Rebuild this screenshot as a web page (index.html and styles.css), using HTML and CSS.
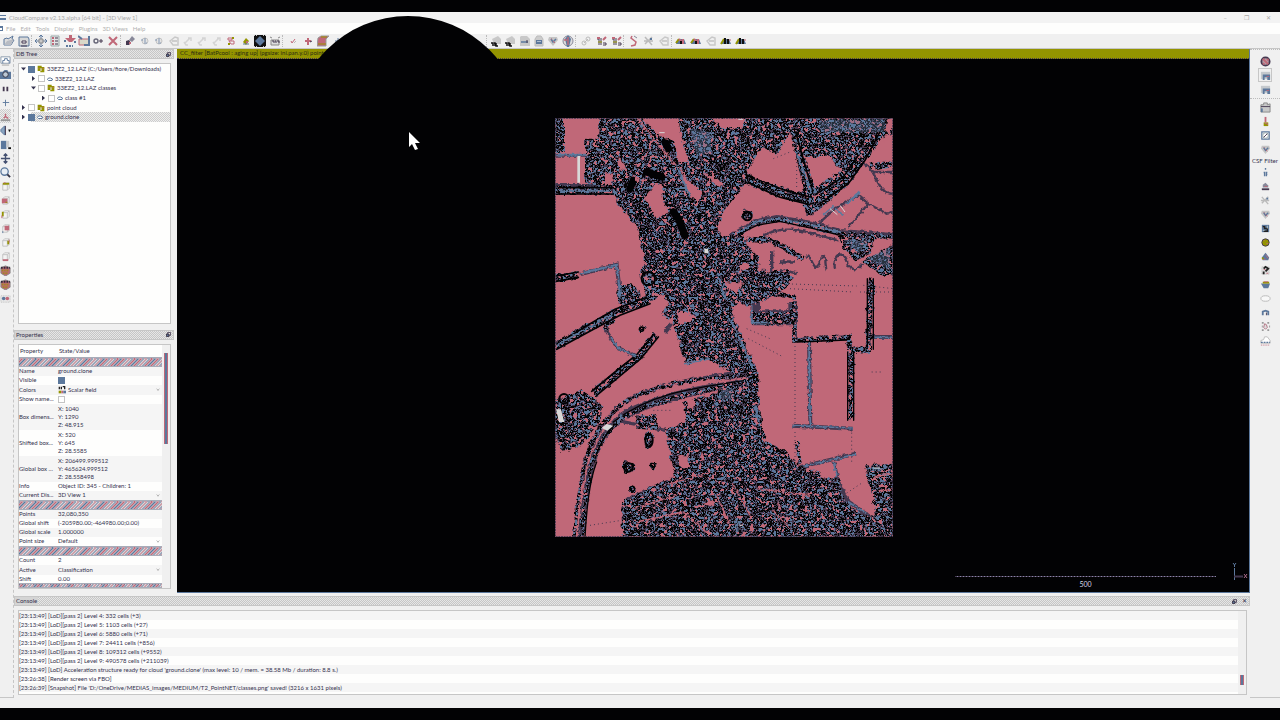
FILE: index.html
```html
<!DOCTYPE html>
<html lang="en">
<head>
<meta charset="utf-8">
<title>CloudCompare</title>
<link rel="stylesheet" href="styles.css">
</head>
<body>
<svg class="defs" aria-hidden="true">
<defs>
<symbol id="open" viewBox="0 0 12 12"><path d="M1 10V4l3-1 1 1 5-3-1 3 2 1-3 5z" fill="#ddd" stroke="#5c789c"/><path d="M1 10l3-4 7-2-3 6z" fill="#b8bcc4"/></symbol>
<symbol id="save" viewBox="0 0 12 12"><path d="M1 2h9l1 2v7H1z" fill="#d8d8d8" stroke="#5c789c"/><path d="M4 6h4v2H4zM3 11h6" fill="#fff" stroke="#443850"/></symbol>
<symbol id="move" viewBox="0 0 12 12"><path d="M6 0v12M0 6h12M4 2l2-2 2 2M4 10l2 2 2-2M2 4L0 6l2 2M10 4l2 2-2 2" fill="none" stroke="#5c789c"/><path d="M4 4h4v4H4z" fill="#c8c8c8" stroke="#888"/></symbol>
<symbol id="list" viewBox="0 0 12 12"><path d="M2 1h8v10H2z" fill="#e4e4e4" stroke="#9aa"/><path d="M3 3h2M3 6h2M3 9h2" stroke="#c06878" stroke-width="2"/><path d="M6 3h3M6 6h3M6 9h3" stroke="#443850"/></symbol>
<symbol id="drop" viewBox="0 0 12 12"><path d="M5 0h3v3h4L8 7H5L1 3h4z" fill="#c06878"/><path d="M1 5v2M11 6v2M2 11h7" stroke="#5c789c" stroke-width="2" stroke-dasharray="2 1"/></symbol>
<symbol id="merge" viewBox="0 0 12 12"><path d="M1 4h10v6H1z" fill="#d8d8c8" stroke="#c06878"/><path d="M0 1l4 3M11 1v9H6" fill="none" stroke="#5c789c" stroke-width="2"/></symbol>
<symbol id="plus" viewBox="0 0 12 12"><circle cx="4" cy="6" r="2" fill="none" stroke="#667" stroke-width="1.4"/><path d="M7 6h4M9 4v4" stroke="#443850"/></symbol>
<symbol id="cross" viewBox="0 0 12 12"><path d="M2 2l8 8M10 2L2 10" stroke="#c06878" stroke-width="2"/></symbol>
<symbol id="tool" viewBox="0 0 12 12"><path d="M8 1l3 3-3 3-3-2z" fill="#889"/><path d="M2 6l3-1 2 3-2 2H2z" fill="#443850"/><path d="M5 7h2v2H5z" fill="#c06878"/></symbol>
<symbol id="dim" viewBox="0 0 12 12"><circle cx="6" cy="6" r="3" fill="#e4e4e4" stroke="#c4c4c4"/><path d="M2 5h2M5 4h2M5 6h2M5 8h3" stroke="#8498b4"/></symbol>
<symbol id="pale" viewBox="0 0 12 12"><path d="M3 8l5-5M6 3h3v3M2 7l2 3h2" fill="none" stroke="#d4d4d4" stroke-width="1.5"/></symbol>
<symbol id="seg" viewBox="0 0 12 12"><path d="M3 3h4v2H3zM4 6h5v3H6z" fill="none" stroke="#c06878"/><path d="M8 2v2M4 8v2" stroke="#949400" stroke-width="2"/></symbol>
<symbol id="lamp" viewBox="0 0 12 12"><path d="M6 3l3 3-3 4-3-3z" fill="#949400"/><path d="M6 6h2v2H6z" fill="#c06878"/><path d="M3 9h6" stroke="#5c789c"/></symbol>
<symbol id="grid" viewBox="0 0 12 12"><path d="M0 0h12v12H0z" fill="#111"/><path d="M6 1l5 5-5 5-5-5z" fill="#5c789c"/><path d="M0 0h3M9 0h3M0 12h3M9 12h3" stroke="#c8c8c8" stroke-width="2" stroke-dasharray="1 1"/></symbol>
<symbol id="sor" viewBox="0 0 12 12"><path d="M1 2l2 1M11 2L9 3M2 10h8V5H2z" fill="#ddd" stroke="#888"/><path d="M3 6h2v2M6 6h1v2M8 6h2v2" fill="none" stroke="#443850"/></symbol>
<symbol id="tick" viewBox="0 0 12 12"><path d="M4 6l1 2 3-4" fill="none" stroke="#c06878"/><path d="M7 8l2-2" stroke="#bbb"/></symbol>
<symbol id="redplus" viewBox="0 0 12 12"><path d="M6 3v7M3 6h6" stroke="#c06878" stroke-width="2"/><path d="M8 7l2-1" stroke="#443850"/></symbol>
<symbol id="redbox" viewBox="0 0 12 12"><path d="M1 3l3-2h8l-3 3v7H0z" fill="#c06878" stroke="#999"/><path d="M4 2h6M1 9h8" stroke="#949400"/></symbol>
<symbol id="cam" viewBox="0 0 12 12"><path d="M2 4l6-3 3 3v5H4z" fill="#c8c8c8"/><path d="M1 8h2v3M4 8h1v3M6 8v3h2" fill="none" stroke="#111" stroke-width="1.5"/></symbol>
<symbol id="doc" viewBox="0 0 12 12"><path d="M2 1h6l3 3v7H1V2z" fill="#c8c8c8"/><path d="M2 7h7" stroke="#5c789c" stroke-width="1.5"/><path d="M8 5v3" stroke="#443850"/></symbol>
<symbol id="lock" viewBox="0 0 12 12"><path d="M2 4l2-3h4l2 3v7H2z" fill="#ccc" stroke="#bbb"/><path d="M3 5h6v4H3z" fill="#5c789c"/><path d="M5 6v1M7 6v1" stroke="#fff"/></symbol>
<symbol id="shield" viewBox="0 0 12 12"><path d="M2 2h8l1 3-5 6-5-6z" fill="#c4c4c4"/><path d="M4 4l2 3 3-3" fill="none" stroke="#5c789c" stroke-width="1.5"/><path d="M6 6l2 2M4 4h1" stroke="#c06878"/></symbol>
<symbol id="globe" viewBox="0 0 12 12"><circle cx="6" cy="6" r="5" fill="#ddd" stroke="#889"/><path d="M6 0l3 4-2 8H5L3 4z" fill="#5c789c"/><path d="M6 2v8M2 5h3" stroke="#c06878" stroke-width="1.4"/></symbol>
<symbol id="links" viewBox="0 0 12 12"><circle cx="4" cy="8" r="2" fill="none" stroke="#bbb"/><circle cx="8" cy="4" r="2" fill="none" stroke="#bbb"/><path d="M4 8l4-4" stroke="#bbb"/></symbol>
<symbol id="sf" viewBox="0 0 12 12"><path d="M2 4h2v6M6 3v7M8 8h3v2H8" fill="none" stroke="#443850"/><path d="M2 3h3M8 5l3-3" stroke="#c06878" stroke-width="2"/><path d="M3 7h4" stroke="#949400"/></symbol>
<symbol id="ramp" viewBox="0 0 12 12"><path d="M2 1v4M5 1v4M7 1h3v4" fill="none" stroke="#222" stroke-width="2"/><path d="M1 9h4" stroke="#949400" stroke-width="4"/><path d="M5 9h3" stroke="#c06878" stroke-width="4"/><path d="M8 9h4" stroke="#5c789c" stroke-width="4"/></symbol>
<symbol id="curve" viewBox="0 0 12 12"><path d="M4 1l-1 2 5 4-1 3-4 1" fill="none" stroke="#c06878" stroke-width="1.5"/><path d="M6 1l3 2" stroke="#889"/></symbol>
<symbol id="scis" viewBox="0 0 12 12"><path d="M2 2l7 8M9 2L2 9M1 6h9" stroke="#bbb" stroke-width="1.5"/><path d="M7 4h2" stroke="#5c789c" stroke-width="2"/></symbol>
<symbol id="gray" viewBox="0 0 12 12"><path d="M2 6l5-4 3 1v7H5z" fill="none" stroke="#c8c8c8" stroke-width="1.5"/><path d="M4 6h5" stroke="#aaa"/></symbol>
<symbol id="arc" viewBox="0 0 12 12"><path d="M1 9l2-5h6l2 5z" fill="#5c789c"/><path d="M1 8l3-4" stroke="#949400" stroke-width="2"/><path d="M4 4l4 4M8 4v5" stroke="#c06878" stroke-width="2"/><path d="M5 6h2v3H5z" fill="#111"/></symbol>
<symbol id="arcdark" viewBox="0 0 12 12"><path d="M1 9l3-5h5l2 5z" fill="#5c789c"/><path d="M1 9l3-5" stroke="#949400" stroke-width="2"/><path d="M5 3v6M8 4v5" stroke="#111" stroke-width="2"/><path d="M9 5h2" stroke="#c06878"/></symbol>
<symbol id="screen" viewBox="0 0 12 12"><path d="M1 2h10v7H1z" fill="#fff" stroke="#8898aa"/><path d="M3 9V6h2V4h3v2h2v3" fill="none" stroke="#5c789c"/><path d="M2 11h8" stroke="#c8c8c8" stroke-width="2"/></symbol>
<symbol id="camera" viewBox="0 0 12 12"><path d="M0 3h3l2-2h3l1 2h3v8H0z" fill="#5c789c"/><circle cx="6" cy="6" r="3" fill="#bcc8d4" stroke="#334"/></symbol>
<symbol id="pause" viewBox="0 0 12 12"><path d="M4 4v5M8 4v5" stroke="#443850" stroke-width="2"/></symbol>
<symbol id="thin" viewBox="0 0 12 12"><path d="M6 3v7M3 6h7" stroke="#5c789c"/></symbol>
<symbol id="axis" viewBox="0 0 12 12"><path d="M1 10h10" stroke="#999" stroke-width="2"/><path d="M6 3v4M4 8l2-2 3 2" fill="none" stroke="#c06878" stroke-width="1.5"/></symbol>
<symbol id="flip" viewBox="0 0 12 12"><path d="M5 1v10L1 7V5z" fill="#8aa4c0" stroke="#5c789c"/><path d="M6 1v10" stroke="#443850"/><path d="M9 5h3l-2 3z" fill="#111"/></symbol>
<symbol id="side" viewBox="0 0 12 12"><path d="M1 2h6v9H1z" fill="#5c789c"/><path d="M7 2h3v7H7z" fill="#ccc"/><path d="M9 10h3" stroke="#111" stroke-width="2"/></symbol>
<symbol id="four" viewBox="0 0 12 12"><path d="M6 1v10M1 6h10M4 3l2-2 2 2M4 9l2 2 2-2" fill="none" stroke="#445070" stroke-width="1.5"/></symbol>
<symbol id="glass" viewBox="0 0 12 12"><circle cx="5" cy="5" r="4" fill="#e8eef4" stroke="#5c789c" stroke-width="1.4"/><path d="M8 8l3 3" stroke="#334" stroke-width="2"/></symbol>
<symbol id="cube" viewBox="0 0 12 12"><path d="M3 4l2-2h5v6l-2 2H3zM3 4h5v6M8 4l2-2" fill="#f4f4f4" stroke="#c0c0c0"/></symbol>
<symbol id="cubetop" viewBox="0 0 12 12"><use href="#cube"/><path d="M3 3h7" stroke="#949400" stroke-width="2"/><path d="M4 2h2" stroke="#c06878"/></symbol>
<symbol id="cubefront" viewBox="0 0 12 12"><use href="#cube"/><path d="M2 4h6v5H2z" fill="#c06878"/><path d="M6 8h2" stroke="#949400"/></symbol>
<symbol id="cubeback" viewBox="0 0 12 12"><use href="#cube"/><path d="M5 3h5v5H5z" fill="#c06878"/><path d="M3 9v2" stroke="#5c789c"/></symbol>
<symbol id="cubeleft" viewBox="0 0 12 12"><use href="#cube"/><path d="M3 3v5" stroke="#949400" stroke-width="2"/><path d="M2 7v3" stroke="#c06878"/></symbol>
<symbol id="cuberight" viewBox="0 0 12 12"><use href="#cube"/><path d="M9 4v4" stroke="#949400" stroke-width="2"/><path d="M10 3v3" stroke="#c06878"/></symbol>
<symbol id="cubebot" viewBox="0 0 12 12"><use href="#cube"/><path d="M3 10h6" stroke="#c06878" stroke-width="2"/></symbol>
<symbol id="iso" viewBox="0 0 12 12"><path d="M1 3l5-2 5 2v6l-5 3-5-3z" fill="#c06878" stroke="#888"/><path d="M1 3h10" stroke="#332838" stroke-width="2" stroke-dasharray="2 1"/><path d="M2 6h8M3 9h6" stroke="#949400" stroke-dasharray="1 1" stroke-width="2"/></symbol>
<symbol id="stereo" viewBox="0 0 12 12"><path d="M1 3h10v7H1z" fill="#e8e8e8" stroke="#bbb" stroke-dasharray="1 1"/><circle cx="4" cy="6" r="2" fill="#5c789c"/><circle cx="8" cy="6" r="2" fill="#c06878"/></symbol>
<symbol id="stop" viewBox="0 0 12 12"><circle cx="6" cy="6" r="4.5" fill="#b49ca4" stroke="#443850" stroke-width="2"/><path d="M3 3l6 6M3 8l2 1M8 3l1 2" stroke="#c06878" stroke-width="2"/></symbol>
<symbol id="win" viewBox="0 0 12 12"><path d="M1 2h10v8H1z" fill="#c4c8cc"/><path d="M3 5h8v6H8V8H5v3H3z" fill="#5c789c"/><path d="M7 7h3" stroke="#c06878"/></symbol>
<symbol id="clap" viewBox="0 0 12 12"><path d="M1 3h3V1h4v2l3-1v9H1z" fill="#c8c8c8" stroke="#888"/><path d="M1 5h10" stroke="#443850"/><path d="M2 7v4" stroke="#5c789c" stroke-width="2"/></symbol>
<symbol id="broom" viewBox="0 0 12 12"><path d="M6 1v6" stroke="#c06878" stroke-width="2"/><path d="M4 7h5v4H4z" fill="#949400"/><path d="M5 8h3v2" fill="none" stroke="#c06878"/></symbol>
<symbol id="slash" viewBox="0 0 12 12"><path d="M2 2h8v8H2z" fill="#fff" stroke="#5c789c" stroke-width="1.4"/><circle cx="6" cy="6" r="3" fill="none" stroke="#9aa"/><path d="M4 8l4-4" stroke="#443850"/></symbol>
<symbol id="info" viewBox="0 0 12 12"><path d="M6 1v2M4 6h1v4M8 6H7v4M7 8h1" fill="none" stroke="#5c789c" stroke-width="1.5"/></symbol>
<symbol id="hat" viewBox="0 0 12 12"><path d="M3 7V4l3-2 3 3v2z" fill="#889"/><path d="M2 9h8" stroke="#443850" stroke-width="2"/><path d="M5 6h3" stroke="#c06878"/></symbol>
<symbol id="ball" viewBox="0 0 12 12"><circle cx="6" cy="6" r="4" fill="#949400" stroke="#443850"/><path d="M4 4h1M7 7h2" stroke="#c06878"/></symbol>
<symbol id="pyr" viewBox="0 0 12 12"><path d="M6 2l4 5-1 3H3L2 7z" fill="#5c789c"/><path d="M6 4l3 4M3 9h3" stroke="#c06878"/><path d="M2 8h2" stroke="#949400" stroke-width="2"/></symbol>
<symbol id="checker" viewBox="0 0 12 12"><path d="M2 2h8v8H2z" fill="#5c789c"/><path d="M3 4h2v2h3v3H4" fill="none" stroke="#222" stroke-width="1.5"/><path d="M8 3v3M3 8h2" stroke="#bcc"/></symbol>
<symbol id="quest" viewBox="0 0 12 12"><path d="M2 2h8v8H2z" fill="#ddd" stroke="#bbb" stroke-dasharray="1 1"/><path d="M4 4l2-2 3 2-3 3M4 7v3" fill="none" stroke="#222" stroke-width="2"/><path d="M4 5h2M7 9h2" stroke="#c06878"/></symbol>
<symbol id="pot" viewBox="0 0 12 12"><path d="M1 5h10l-2 5H4z" fill="#5c789c"/><path d="M3 4h7" stroke="#949400" stroke-width="2"/><path d="M4 3h5" stroke="#c06878"/></symbol>
<symbol id="oval" viewBox="0 0 12 12"><ellipse cx="6" cy="6" rx="5" ry="3" fill="#f8f8f8" stroke="#b8b8b8"/></symbol>
<symbol id="arch" viewBox="0 0 12 12"><path d="M3 9V5l3-1 3 1v4" fill="none" stroke="#5c789c" stroke-width="2"/><path d="M7 6v3" stroke="#443850"/></symbol>
<symbol id="treeiso" viewBox="0 0 12 12"><path d="M2 2h2M8 2h2M2 10h2M8 10h2M2 6h1M10 6h1" stroke="#999" stroke-width="2"/><path d="M5 3l-1 4 2 2 2-2-1-3z" fill="#ddd" stroke="#b07080"/></symbol>
<symbol id="cloudup" viewBox="0 0 12 12"><path d="M1 9V6l3-1 1-3h3l3 4v3z" fill="#fff" stroke="#bbb"/><path d="M1 8h10" stroke="#5c789c" stroke-width="1.5" stroke-dasharray="2 1"/><path d="M1 11h10" stroke="#c06878" stroke-dasharray="1 1"/></symbol>
<symbol id="folder" viewBox="0 0 12 12"><path d="M1 1h6v2h4v8H5V9H1z" fill="#949400"/><path d="M5 5h2v4H5z" fill="#d8d0c0"/><path d="M8 5h3M2 5h2" stroke="#c06878"/></symbol>
<symbol id="cloud" viewBox="0 0 12 12"><path d="M3 9L1 7l2-3h4l4 2-1 3z" fill="#fff" stroke="#5c789c" stroke-width="2"/></symbol>
<symbol id="float" viewBox="0 0 12 12"><path d="M4 1h7v7H4z" fill="none" stroke="#443850" stroke-width="2"/><path d="M1 5h6v6H1z" fill="#5c789c" stroke="#332838" stroke-width="2"/></symbol>
<filter id="ground" x="0" y="0" width="100%" height="100%" color-interpolation-filters="sRGB">
<feTurbulence type="fractalNoise" baseFrequency="0.085" numOctaves="2" seed="7" result="n"/>
<feColorMatrix in="n" type="matrix" values="3 0 0 0 -1  3 0 0 0 -1  3 0 0 0 -1  0 0 0 0 1"/>
<feComponentTransfer result="tex">
<feFuncR type="discrete" tableValues=".36 .27 .02 .02 .27 .02 .02 .27 .37 .27 .02 .75"/>
<feFuncG type="discrete" tableValues=".47 .22 .02 .02 .22 .02 .02 .22 .47 .22 .02 .41"/>
<feFuncB type="discrete" tableValues=".61 .31 .02 .02 .31 .02 .02 .31 .62 .31 .02 .47"/>
</feComponentTransfer>
<feTurbulence type="fractalNoise" baseFrequency="0.06" numOctaves="1" seed="12" result="soft"/>
<feDisplacementMap in="SourceGraphic" in2="soft" scale="22" xChannelSelector="R" yChannelSelector="G" result="shape"/>
<feComposite in="tex" in2="shape" operator="in"/>
</filter>
<filter id="rough" x="0" y="0" width="100%" height="100%" color-interpolation-filters="sRGB">
<feTurbulence type="fractalNoise" baseFrequency="0.1" numOctaves="2" seed="3" result="n"/>
<feDisplacementMap in="SourceGraphic" in2="n" scale="12" xChannelSelector="R" yChannelSelector="G"/>
</filter>
</defs>
</svg>

<main class="window">
<header class="title-bar"><span class="app-mark"></span><span class="title">CloudCompare v2.13.alpha [64 bit] - [3D View 1]</span><span class="win-keys"><span>–</span><span>❐</span><span>✕</span></span></header>
<nav class="menu-bar"><span class="app-mark small"></span><a href="#">File</a><a href="#">Edit</a><a href="#">Tools</a><a href="#">Display</a><a href="#">Plugins</a><a href="#">3D Views</a><a href="#">Help</a></nav>
<div class="toolbar">
<div class="group n2"><button aria-label="Open"><svg><use href="#open"/></svg></button><button aria-label="Save"><svg><use href="#save"/></svg></button></div>
<div class="group n6"><button aria-label="Point picking"><svg><use href="#move"/></svg></button><button aria-label="Point list"><svg><use href="#list"/></svg></button><button aria-label="Sample"><svg><use href="#drop"/></svg></button><button aria-label="Merge"><svg><use href="#merge"/></svg></button><button aria-label="Clone"><svg><use href="#plus"/></svg></button><button aria-label="Delete"><svg><use href="#cross"/></svg></button></div>
<div class="group n11"><button aria-label="Segment"><svg><use href="#tool"/></svg></button><button aria-label="Register"><svg><use href="#dim"/></svg></button><button aria-label="Align"><svg><use href="#dim"/></svg></button><button aria-label="Subsample"><svg><use href="#gray"/></svg></button><button aria-label="Distance"><svg><use href="#pale"/></svg></button><button aria-label="Mesh distance"><svg><use href="#pale"/></svg></button><button aria-label="Statistics"><svg><use href="#pale"/></svg></button><button aria-label="Components"><svg><use href="#seg"/></svg></button><button aria-label="Rasterize"><svg><use href="#lamp"/></svg></button><button aria-label="Density"><svg><use href="#grid"/></svg></button><button aria-label="SOR filter"><svg><use href="#sor"/></svg></button></div>
<div class="group n14"><button aria-label="Trace"><svg><use href="#tick"/></svg></button><button aria-label="Translate"><svg><use href="#redplus"/></svg></button><button aria-label="Cross section"><svg><use href="#redbox"/></svg></button><button aria-label="Fit"><svg><use href="#thin"/></svg></button></div>
<div class="group n6"><button aria-label="Animation"><svg><use href="#cam"/></svg></button><button aria-label="Film"><svg><use href="#cam"/></svg></button><button aria-label="Export"><svg><use href="#doc"/></svg></button><button aria-label="Lock"><svg><use href="#lock"/></svg></button><button aria-label="Quality"><svg><use href="#shield"/></svg></button><button aria-label="Projection"><svg><use href="#globe"/></svg></button></div>
<div class="group n3"><button aria-label="Link"><svg><use href="#links"/></svg></button><button aria-label="Facets"><svg><use href="#sf"/></svg></button><button aria-label="Classify"><svg><use href="#sf"/></svg></button></div>
<div class="group n3"><button aria-label="Curve"><svg><use href="#curve"/></svg></button><button aria-label="Cut"><svg><use href="#scis"/></svg></button><button aria-label="Export cut"><svg><use href="#gray"/></svg></button></div>
<div class="group n5"><button aria-label="Train"><svg><use href="#arc"/></svg></button><button aria-label="Classify cloud"><svg><use href="#arc"/></svg></button><button aria-label="Options"><svg><use href="#gray"/></svg></button><button aria-label="Train again"><svg><use href="#arcdark"/></svg></button><button aria-label="Evaluate"><svg><use href="#arcdark"/></svg></button></div>
</div>

<div class="workspace">
<aside class="strip left">
<button aria-label="Display"><svg><use href="#screen"/></svg></button><button aria-label="Snapshot"><svg><use href="#camera"/></svg></button><button aria-label="Pause"><svg><use href="#pause"/></svg></button><button aria-label="Center"><svg><use href="#thin"/></svg></button><button class="on" aria-label="Pivot"><svg><use href="#axis"/></svg></button><button aria-label="Flip"><svg><use href="#flip"/></svg></button><button aria-label="Side"><svg><use href="#side"/></svg></button><button aria-label="Pan"><svg><use href="#four"/></svg></button><button aria-label="Zoom"><svg><use href="#glass"/></svg></button><button aria-label="Top view"><svg><use href="#cubetop"/></svg></button><button aria-label="Front view"><svg><use href="#cubefront"/></svg></button><button aria-label="Left view"><svg><use href="#cubeleft"/></svg></button><button aria-label="Back view"><svg><use href="#cubeback"/></svg></button><button aria-label="Right view"><svg><use href="#cuberight"/></svg></button><button aria-label="Bottom view"><svg><use href="#cubebot"/></svg></button><button aria-label="Isometric 1"><svg><use href="#iso"/></svg></button><button aria-label="Isometric 2"><svg><use href="#iso"/></svg></button><button aria-label="Stereo"><svg><use href="#stereo"/></svg></button>
</aside>

<div class="center">
<div class="upper">
<div class="docks">
<section class="dock tree-dock">
<h2 class="dock-title"><span>DB Tree</span><button aria-label="Float DB Tree"><svg><use href="#float"/></svg></button></h2>
<ul class="tree">
<li><i class="tw down"></i><input type="checkbox" id="t1" checked><svg><use href="#folder"/></svg><label for="t1">33EZ2_12.LAZ (C:/Users/fiore/Downloads)</label></li>
<li class="lv1"><i class="tw"></i><input type="checkbox" id="t2"><svg class="pc"><use href="#cloud"/></svg><label for="t2">33EZ2_12.LAZ</label></li>
<li class="lv1"><i class="tw down"></i><input type="checkbox" id="t3"><svg><use href="#folder"/></svg><label for="t3">33EZ2_12.LAZ classes</label></li>
<li class="lv2"><i class="tw"></i><input type="checkbox" id="t4"><svg class="pc"><use href="#cloud"/></svg><label for="t4">class #1</label></li>
<li><i class="tw"></i><input type="checkbox" id="t5"><svg><use href="#folder"/></svg><label for="t5">point cloud</label></li>
<li class="selected"><i class="tw"></i><input type="checkbox" id="t6" checked><svg class="pc"><use href="#cloud"/></svg><label for="t6">ground.clone</label></li>
</ul>
</section>
<section class="dock">
<h2 class="dock-title"><span>Properties</span><button aria-label="Float Properties"><svg><use href="#float"/></svg></button></h2>
<div class="props">
<table>
<thead><tr><th>Property</th><th>State/Value</th></tr></thead>
<tbody>
<tr class="section"><td colspan="2"></td></tr>
<tr class="alt"><td>Name</td><td>ground.clone</td></tr>
<tr><td><label for="vis">Visible</label></td><td><input type="checkbox" id="vis" checked></td></tr>
<tr class="alt tall"><td><label for="col">Colors</label></td><td><div class="combo"><svg><use href="#ramp"/></svg><select id="col"><option>Scalar field</option></select></div></td></tr>
<tr><td><label for="shn">Show name...</label></td><td><input type="checkbox" id="shn"></td></tr>
<tr class="alt triple"><td>Box dimens...</td><td>X: 1040<br>Y: 1290<br>Z: 48.915</td></tr>
<tr class="triple"><td>Shifted box...</td><td>X: 520<br>Y: 645<br>Z: 28.5585</td></tr>
<tr class="alt triple"><td>Global box ...</td><td>X: 206499.999512<br>Y: 465624.999512<br>Z: 28.558498</td></tr>
<tr><td>Info</td><td>Object ID: 345 - Children: 1</td></tr>
<tr class="alt tall"><td><label for="dis">Current Dis...</label></td><td><div class="combo"><select id="dis"><option>3D View 1</option></select></div></td></tr>
<tr class="section"><td colspan="2"></td></tr>
<tr class="alt"><td>Points</td><td>32,080,350</td></tr>
<tr><td>Global shift</td><td>(-205980.00;-464980.00;0.00)</td></tr>
<tr class="alt"><td>Global scale</td><td>1.000000</td></tr>
<tr class="tall"><td><label for="psz">Point size</label></td><td><div class="combo"><select id="psz"><option>Default</option></select></div></td></tr>
<tr class="section"><td colspan="2"></td></tr>
<tr><td>Count</td><td>2</td></tr>
<tr class="alt tall"><td><label for="act">Active</label></td><td><div class="combo"><select id="act"><option>Classification</option></select></div></td></tr>
<tr><td>Shift</td><td>0.00</td></tr>
<tr class="section cut"><td colspan="2"></td></tr>
</tbody>
</table>
<div class="track"><div class="thumb"></div></div>
</div>
</section>
</div>

<section class="view">
<div class="hint">CC_filter [BatPcool : aging up] (pgsize: ini.pan.y.0) points : 3 name</div>
<div class="canvas">
<svg class="map" viewBox="15 18 1014 1257" role="img" aria-label="Classified ground point cloud">
<rect x="15" y="18" width="1014" height="1257" fill="#c06878"/>
<g filter="url(#rough)" fill="none" stroke="#443850">
<path d="M15 128H110M15 222H190M90 487L200 458 212 560" stroke-width="12"/>
<path d="M540 375L620 330 680 318 780 335 870 360 1029 372" stroke-width="18"/>
<path d="M935 150C985 170 975 245 1029 245M1029 180L970 180M895 345L955 275 1010 305 1029 300M640 370C720 330 790 370 865 385M770 440c8 -40 20 60 40 10s15 20 20 25M855 470c-10-60 40-50 38-10l22 15 25-20M800 340L855 290 925 250 955 275" stroke-width="7"/>
<path d="M735 565V685L895 675 902 715 955 712 962 500M955 675H1029M777 685L781 945M728 941L908 950M752 1065L918 1025M850 1050L865 1110L890 1165 960 1215" stroke-width="12"/>
<path d="M165 650L200 705 265 735M345 660L365 635M200 925L345 955M225 1165L375 1100" stroke-width="10"/>
<path d="M75 1275C90 1080 110 980 190 900S420 800 600 775" stroke-width="9"/>
<path d="M90 1275C105 1080 130 980 200 925S420 840 600 800" stroke-width="26"/>
<path d="M600 570H735V640H605Z" fill="#443850" stroke="none"/>
<path d="M640 560v-90M665 535v-120M690 475l50 10M690 450h45M680 520l40-20" stroke-width="10"/>
</g>
<g filter="url(#ground)">
<rect x="15" y="18" width="1014" height="1257" fill="none"/>
<path d="M145 18H1029V65L1000 75 945 150 920 180 850 260 790 305 765 300 755 275 650 240 585 215 520 300 505 340 510 375 540 375 580 360 590 400 625 430 630 480 705 475 735 500 680 550 600 580 535 570 560 640 625 780 625 850 645 990 700 1010 745 1062 870 1100 885 1170 950 1212 978 1208 945 1060 1029 1055V1275H215V1170L330 1110 375 1095 345 950 410 930 400 870 480 850 580 800 470 740 405 755 370 640 345 545 290 560 270 490 285 450 265 350 200 270 180 225 105 215V80H145Z"/>
<path d="M15 18H42V120H15ZM15 865L95 835 160 880 150 930 100 995 35 1020 15 970ZM868 375H975L960 420 920 452 880 410ZM935 450L1029 395V490L990 487ZM255 910L320 910 325 955 260 950ZM605 600H735V635H605Z"/>
<g fill="none" stroke="#000">
<path d="M15 235H200M590 200L700 245 790 265M725 60L780 260M790 270L880 215 935 140 1005 20" stroke-width="28"/>
<path d="M15 500L85 488M318 668L265 735 200 788 130 845M780 260V310M960 165L1029 155M15 703L120 645 200 600 290 565 340 530" stroke-width="22"/>
<path d="M590 382L660 385 710 410 760 440M732 570V685L805 682 895 676 900 715 955 712 962 500M903 720L902 925M610 540L735 555M165 655L200 600" stroke-width="16"/>
<path d="M540 375L620 332 680 322 780 340 870 365 1029 376M75 1275C90 1080 110 980 190 900S420 800 590 790M95 1275C110 1080 130 990 205 930S420 845 590 806M330 1115L480 1080M950 1070H1029M740 990L750 1060" stroke-width="12"/>
</g>
<circle cx="592" cy="310" r="18"/><circle cx="235" cy="550" r="34"/><circle cx="275" cy="652" r="9"/><circle cx="235" cy="1066" r="18"/><circle cx="308" cy="1060" r="9"/><circle cx="247" cy="1130" r="10"/><ellipse cx="297" cy="985" rx="15" ry="26"/><circle cx="550" cy="560" r="25"/><circle cx="355" cy="600" r="18"/>
</g>
<g fill="none" stroke="#020204" stroke-linecap="round">
<path d="M290 180L335 195M370 300L385 320 405 370M240 230L250 205M345 90L355 110" stroke-width="22"/>
<path d="M25 227H190M25 246H190M595 190L700 233 780 255M595 212L690 256 780 278M720 70L768 260M737 60L788 240M800 245L880 195 925 130M810 275L895 215 945 145 1005 30M20 712L125 655 210 610 300 575M20 697L118 637 195 592 290 556M310 668L260 728 195 780 125 838M325 675L272 740 205 796 140 850M18 492L85 480M18 508L85 496" stroke-width="5"/>
<path d="M545 378L620 340 690 328 790 350 880 372M893 720V925M911 720V925M952 500V705M970 500V712M740 690L890 684M190 930C300 845 420 830 580 806M135 1040C150 990 170 960 195 935M105 1275C110 1180 120 1100 140 1050" stroke-width="4"/>
<circle cx="592" cy="312" r="13" stroke-width="6"/><circle cx="235" cy="1066" r="13" stroke-width="6"/><circle cx="308" cy="1060" r="6" stroke-width="4"/><circle cx="275" cy="652" r="6" stroke-width="4"/><circle cx="247" cy="1130" r="7" stroke-width="4"/><ellipse cx="297" cy="985" rx="11" ry="20" stroke-width="6"/><circle cx="42" cy="860" r="14" stroke-width="6"/><circle cx="295" cy="500" r="20" stroke-width="6"/>
</g>
<g filter="url(#rough)" fill="#c06878">
<path d="M275 18H385L395 80 417 150H385L372 85 330 75ZM485 18H588L575 48H515ZM590 180L635 105 680 130 720 60 742 150 762 235 740 240 620 200ZM765 135H845L855 160 875 175 825 205 795 230ZM205 128L228 165 208 180ZM312 220L335 215 340 270 357 300 320 320 285 260ZM390 185L458 240 450 262 425 258ZM455 178L522 215 505 225ZM985 90L1029 82V148L962 150ZM1012 22L1029 18V50L1005 60ZM165 180L190 185 185 218H165ZM250 190L272 200 262 212ZM380 600L420 600 425 630 385 635ZM525 510L580 515 560 540 530 530ZM575 455H595V475H575ZM630 570H715V595H630ZM410 860L435 860 435 885 415 890ZM385 1030H415L418 1065 388 1065ZM455 1015L465 1045 450 1048ZM497 985L515 1005 510 1010ZM460 1175L495 1165 480 1185ZM685 1165L695 1195 685 1190ZM805 1060L850 1055 860 1095 815 1100ZM405 765L470 745 475 790 410 792Z"/>
<path d="M262 18L380 165M430 240L390 170M340 1120L470 1085M545 1110L600 1210M670 1195L720 1250M970 1095L1029 1085M985 1140L1029 1130M400 1200L470 1260M250 1190L380 1150M260 1230L400 1200M620 1130L780 1150M500 1150L540 1240" fill="none" stroke="#c06878" stroke-width="4"/>
<path d="M80 1275C98 1080 120 985 195 912S420 820 590 798" fill="none" stroke="#c06878" stroke-width="6"/>
</g>
<g filter="url(#rough)" fill="none" stroke="#5c789c">
<path d="M15 128H110M30 236H180M90 485L200 458 212 560M380 160L420 255M505 490L525 560M740 120L785 245" stroke-width="6"/>
<path d="M560 365L620 330 680 320 780 337 870 362M777 690L781 945M728 941L908 948M760 1062L918 1027M850 1050L862 1095M895 1170L950 1205M970 676H1029M180 675L205 708 260 733M20 700L190 605M605 580V632H660M405 755L480 740M950 1070H1000M615 880L630 950M560 1220v50M540 620L610 770" stroke-width="5"/>
<path d="M805 22h200v38H815z" fill="#5c789c" fill-opacity=".35" stroke="none"/>
<path d="M420 50l60 10 5 60-45 15zM885 385h70l-30 40zM950 440l70-35v70zM520 830h30v30h-50z" fill="#5c789c" fill-opacity=".4" stroke="none"/>
<path d="M820 310l35-30M855 290l25 20M890 275l40-35M205 935L215 905" stroke-width="6"/>
</g>
<g fill="#d8d8d8"><path d="M82 132h8v80h-8zM18 892h15l10 38H27zM155 948l15-12 20 5-18 15zM463 410h12v14h-12z"/><path d="M840 290l22 18M870 280l15 20M328 62h16M565 22h14M970 1068h20M568 1240h10" stroke="#d8d8d8" stroke-width="3"/></g>
<g fill="none" stroke="#443850" stroke-width="3" stroke-dasharray="3 9"><path d="M740 150V230M735 570V950M690 515L920 522M720 530L910 540M930 540H1029M590 650L660 680M595 680L700 735M310 895H370M735 960V1060M905 950V1050M120 1240L215 1225M965 780H1000M880 1150l60-40M670 140l50-20M940 520l90 10"/></g>
<rect x="16" y="19" width="1012" height="1255" fill="none" stroke="#443850" stroke-width="3" stroke-dasharray="6 2"/>
</svg>
<div class="scale"><div class="scale-line"></div><span>500</span></div>
<svg class="axes" viewBox="0 0 18 20"><path d="M4.5 6v12" stroke="#5c789c"/><path d="M4 14.500h9" stroke="#443850" stroke-width="2"/><path d="M3 1l1.500 2L6 1M4.500 3v2" fill="none" stroke="#5c789c"/><path d="M14 12l3 4M17 12l-3 4" stroke="#a86a88"/></svg>
</div>
</section>
</div>

<section class="console">
<h2 class="dock-title"><span>Console</span><button aria-label="Float Console"><svg><use href="#float"/></svg></button><button aria-label="Close Console">✕</button></h2>
<div class="log">
<ol>
<li>[23:13:49] [LoD][pass 2] Level 4: 332 cells (+3)</li>
<li>[23:13:49] [LoD][pass 2] Level 5: 1103 cells (+27)</li>
<li>[23:13:49] [LoD][pass 2] Level 6: 5880 cells (+71)</li>
<li>[23:13:49] [LoD][pass 2] Level 7: 24411 cells (+856)</li>
<li>[23:13:49] [LoD][pass 2] Level 8: 109312 cells (+9552)</li>
<li>[23:13:49] [LoD][pass 2] Level 9: 490578 cells (+211039)</li>
<li>[23:13:49] [LoD] Acceleration structure ready for cloud 'ground.clone' (max level: 10 / mem. = 38.58 Mb / duration: 8.8 s.)</li>
<li>[23:26:38] [Render screen via FBO]</li>
<li>[23:26:39] [Snapshot] File 'D:/OneDrive/MEDIAS_images/MEDIUM/T2_PointNET/classes.png' saved! (3216 x 1631 pixels)</li>
</ol>
<div class="track"><div class="thumb"></div></div>
</div>
</section>
</div>

<aside class="strip right">
<button aria-label="Disable filter"><svg><use href="#stop"/></svg></button><button class="framed" aria-label="EDL shader"><svg><use href="#win"/></svg></button><button aria-label="SSAO shader"><svg><use href="#win"/></svg></button>
<hr>
<button aria-label="Animation"><svg><use href="#clap"/></svg></button><button aria-label="Broom"><svg><use href="#broom"/></svg></button><button aria-label="Compass"><svg><use href="#slash"/></svg></button><button aria-label="Canupo"><svg><use href="#shield"/></svg></button>
<button class="text">CSF Filter</button>
<button aria-label="Information"><svg><use href="#info"/></svg></button><button aria-label="Hidden point removal"><svg><use href="#hat"/></svg></button><button aria-label="Classifier"><svg><use href="#scis"/></svg></button><button aria-label="M3C2"><svg><use href="#shield"/></svg></button><button aria-label="Boolean"><svg><use href="#checker"/></svg></button><button aria-label="Sky view"><svg><use href="#ball"/></svg></button><button aria-label="Poisson"><svg><use href="#pyr"/></svg></button><button aria-label="Ransac"><svg><use href="#quest"/></svg></button><button aria-label="Surface"><svg><use href="#pot"/></svg></button><button aria-label="Sphere"><svg><use href="#oval"/></svg></button><button aria-label="Arch"><svg><use href="#arch"/></svg></button><button aria-label="Tree iso"><svg><use href="#treeiso"/></svg></button><button aria-label="Layers"><svg><use href="#cloudup"/></svg></button>
</aside>
</div>
<footer class="status"></footer>
<div class="spot"></div>
<svg class="cursor" viewBox="0 0 12 20"><path d="M1 1v15l3-3 3 6 3-1-3-6h5z" fill="#fff"/></svg>
</main>
</body>
</html>
```
FILE: styles.css
```css
:root {
  --line: #c6c6c6;
  --face: #f0f0f0;
  --ink: #34324e;
  --blue: #5c789c;
  --rose: #c06878;
}
* { box-sizing: border-box; }
body {
  margin: 0;
  min-height: 100vh;
  padding: 12px 0;
  background: #020204;
  display: flex;
  flex-direction: column;
  font: 6px/8px "Lato", "Open Sans", sans-serif;
  color: var(--ink);
}
.defs { position: absolute; width: 0; height: 0; }
button, select, input { font: inherit; color: inherit; margin: 0; padding: 0; border: 0; background: none; }
a { color: inherit; text-decoration: none; }
.window { position: relative; flex: 1; display: flex; flex-direction: column; background: var(--face); overflow: hidden; }

.title-bar { height: 11px; display: flex; align-items: center; gap: 3px; color: #a8a8a8; background: #f3f3f3; }
.title { flex: 1; }
.app-mark { width: 6px; height: 5px; border: solid var(--blue); border-width: 1px 0 2px; }
.app-mark.small { width: 3px; height: 5px; border-width: 2px 1px 1px 0; }
.win-keys { display: flex; gap: 17px; padding-right: 9px; }
.menu-bar { height: 11px; display: flex; align-items: center; background: #fefefd; color: #b0b0b0; gap: 5px; }
.menu-bar .app-mark { margin-right: -2px; }

.toolbar { height: 15px; display: flex; align-items: center; padding-left: 2px; border-bottom: 1px solid var(--line); }
.group { display: flex; height: 12px; border-right: 1px dotted #bbb; margin-right: 2px; }
.group:last-child { border: 0; }
.group button { flex: 1; max-width: 15px; display: flex; justify-content: center; align-items: center; }
.group svg { width: 12px; height: 12px; }
.n2 { width: 30px; }
.n3 { width: 46px; }
.n5 { width: 74px; }
.n6 { width: 87px; }
.n11 { width: 160px; }
.n14 { width: 202px; }

.workspace { flex: 1; display: flex; min-height: 0; }
.strip { display: flex; flex-direction: column; align-items: center; flex: none; }
.strip button { height: 14px; display: flex; align-items: center; justify-content: center; flex: none; }
.strip svg { width: 11px; height: 11px; }
.strip.left { width: 14px; padding: 4px 2px 0 0; border-right: 1px dashed var(--line); border-bottom: 1px solid var(--line); }
.strip.left .on { background: repeating-conic-gradient(#ccc 0 25%, #eee 0 50%) 0 0 / 2px 2px; }
.strip.right { width: 30px; padding-top: 4px; border-top: 1px dotted #bbb; border-bottom: 1px solid var(--line); }
.strip.right .framed { border: 1px solid var(--line); width: 14px; }
.strip.right hr { width: 100%; margin: 2px 0 1px; border: 0; border-top: 1px dotted #bbb; }
.strip.right .text { height: 9px; white-space: nowrap; }

.center { flex: 1; min-width: 0; display: flex; flex-direction: column; }
.upper { flex: 1; display: flex; min-height: 0; }
.docks { width: 163px; flex: none; display: flex; flex-direction: column; padding-right: 3px; gap: 6px; }
.dock { display: flex; flex-direction: column; gap: 4px; }
.tree-dock { flex: 1; }
.dock-title {
  margin: 0; height: 10px; flex: none; display: flex; align-items: center; gap: 5px; padding: 0 2px 0 0;
  font: inherit; border: 1px solid var(--line);
  background: repeating-conic-gradient(#c6c6c6 0 25%, #e6e6e6 0 50%) 0 0 / 2px 2px;
}
.dock-title span { background: #d4d4d4; padding: 0 1px; }
.dock-title button { display: flex; line-height: 6px; }
.dock-title span + button { margin-left: auto; }
.dock-title svg { width: 5px; height: 5px; }

input[type="checkbox"] { appearance: none; width: 7px; height: 7px; border: 1px solid #c4c4c4; background: #fff; flex: none; display: block; }
input[type="checkbox"]:checked { background: var(--blue); border-color: var(--blue); }

.tree { flex: 1; margin: 0 3px 0 4px; padding: 0 0 0 2px; list-style: none; background: #fefefd; border: 1px solid var(--line); display: grid; grid-template-rows: 10px 9px 10px 10px 9px 10px; align-content: start; }
.tree li { display: flex; align-items: center; gap: 2px; white-space: nowrap; }
.tree li svg { width: 8px; height: 8px; flex: none; }
.tree li .pc { width: 6px; }
.tree .lv1 { padding-left: 10px; }
.tree .lv2 { padding-left: 20px; }
.tree .selected { background: linear-gradient(90deg, #fefefd 10px, transparent 10px), repeating-conic-gradient(#ccc 0 25%, #eee 0 50%) 0 0 / 2px 2px; }
.tw { width: 5px; height: 5px; flex: none; background: var(--ink); clip-path: polygon(20% 0, 80% 50%, 20% 100%); }
.tw.down { clip-path: polygon(0 20%, 100% 20%, 50% 80%); }

.props { margin: 0 3px 4px 4px; border: 1px solid var(--line); display: flex; background: #fefefd; }
.props table { flex: 1; border-collapse: collapse; table-layout: fixed; }
.props td, .props th { padding: 0; font-weight: 400; text-align: left; height: 9px; white-space: nowrap; }
.props th { height: 13px; padding-left: 1px; }
.props th:first-child { width: 39px; }
.props .alt { background: #f5f5f5; }
.props .tall td { height: 10px; }
.props .triple td { padding: 1px 0; }
.props .section td {
  background: repeating-linear-gradient(135deg, #5c789c 0 1px, #d8d4d8 1px 2px, #c06878 2px 3px, #d8d4d8 3px 4px);
  border: solid #a8acb8; border-width: 1px 0;
}
.props .cut td { height: 4px; }
.combo { display: flex; align-items: center; gap: 2px; height: 8px; }
.combo svg { width: 8px; height: 8px; }
.combo::after { content: ""; width: 4px; height: 3px; margin-right: 2px; background: #989898; clip-path: polygon(0 0, 50% 100%, 100% 0, 50% 60%); }
.combo select { appearance: none; flex: 1; height: 8px; line-height: 8px; min-width: 0; }
.track { width: 8px; background: var(--face); display: flex; justify-content: center; }
.track .thumb { width: 4px; background: var(--blue); border: solid var(--rose); border-width: 0 1px; }
.props .thumb { height: 91px; margin-top: 8px; }

.view { flex: 1; min-width: 0; display: flex; flex-direction: column; background: #020204; border-right: 1px solid var(--blue); border-bottom: 1px solid var(--blue); }
.hint { height: 10px; flex: none; background: #949400; color: #2c2c10; padding-left: 3px; border-bottom: 1px dotted #443850; white-space: nowrap; }
.canvas { position: relative; flex: 1; }
.map { position: absolute; left: 35.3%; top: 59px; width: 338px; height: 419px; }
.scale { position: absolute; right: 33px; bottom: 4px; width: 261px; text-align: center; color: #d8d8e4; font-size: 7px; }
.scale-line { height: 1px; margin-bottom: 3px; background: repeating-linear-gradient(90deg, #443850 0 2px, #8888a8 2px 3px); }
.axes { position: absolute; right: 1px; bottom: 10px; width: 18px; height: 20px; }

.console { padding: 3px 0 3px; flex: none; }
.log { margin: 4px 3px 0 4px; border: 1px solid var(--line); display: flex; background: #fefefd; }
.log ol { flex: 1; margin: 0; padding: 0 0 2px 0; list-style: none; }
.log li { line-height: 9px; white-space: nowrap; }
.log li:nth-child(odd) { background: #f5f5f5; }
.log .track { align-items: flex-end; padding-bottom: 9px; }
.log .thumb { height: 10px; }
.status { height: 10px; flex: none; }

.spot { position: absolute; left: 293px; top: 4px; width: 230px; height: 230px; border-radius: 50%; background: #020204; clip-path: inset(0 0 184px 0); }
.cursor { position: absolute; left: 408px; top: 119px; width: 12px; height: 20px; }
```
